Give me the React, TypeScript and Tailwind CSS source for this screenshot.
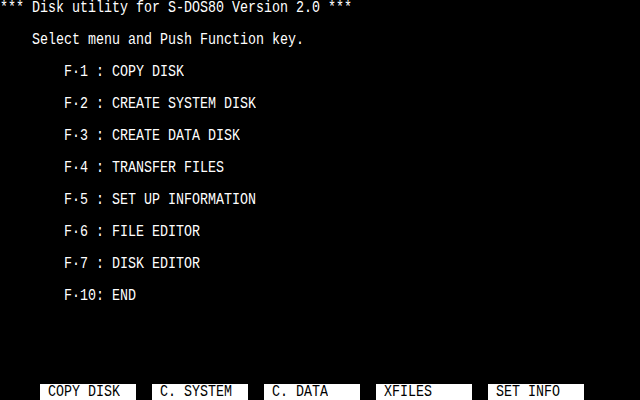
import React from 'react';

const menu = [
  'F·1 : COPY DISK',
  'F·2 : CREATE SYSTEM DISK',
  'F·3 : CREATE DATA DISK',
  'F·4 : TRANSFER FILES',
  'F·5 : SET UP INFORMATION',
  'F·6 : FILE EDITOR',
  'F·7 : DISK EDITOR',
  'F·10: END',
];

const keys = ['COPY DISK', 'C. SYSTEM', 'C. DATA', 'XFILES', 'SET INFO'];

const Txt: React.FC<{ children: React.ReactNode }> = ({ children }) => (
  <span className="block leading-[12px] scale-y-[1.3] whitespace-pre">{children}</span>
);

const Row: React.FC<{ pad?: string; children?: React.ReactNode }> = ({ pad = '', children }) => (
  <div className={`h-4 flex items-center ${pad}`}>{children && <Txt>{children}</Txt>}</div>
);

export default function App() {
  return (
    <div
      className="w-[640px] h-[400px] bg-black text-white overflow-hidden flex flex-col text-[13.333px]"
      style={{ fontFamily: '"Liberation Mono", "DejaVu Sans Mono", monospace' }}
    >
      <Row>*** Disk utility for S-DOS80 Version 2.0 ***</Row>
      <Row />
      <Row pad="pl-[32px]">Select menu and Push Function key.</Row>
      <Row />
      {menu.map((m) => (
        <React.Fragment key={m}>
          <Row pad="pl-[64px]">{m}</Row>
          <Row />
        </React.Fragment>
      ))}
      <div className="flex-1" />
      <div className="h-4 flex gap-4 pl-[40px]">
        {keys.map((k) => (
          <div key={k} className="w-[96px] h-4 bg-white text-black pl-2 flex items-center">
            <Txt>{k}</Txt>
          </div>
        ))}
      </div>
    </div>
  );
}
